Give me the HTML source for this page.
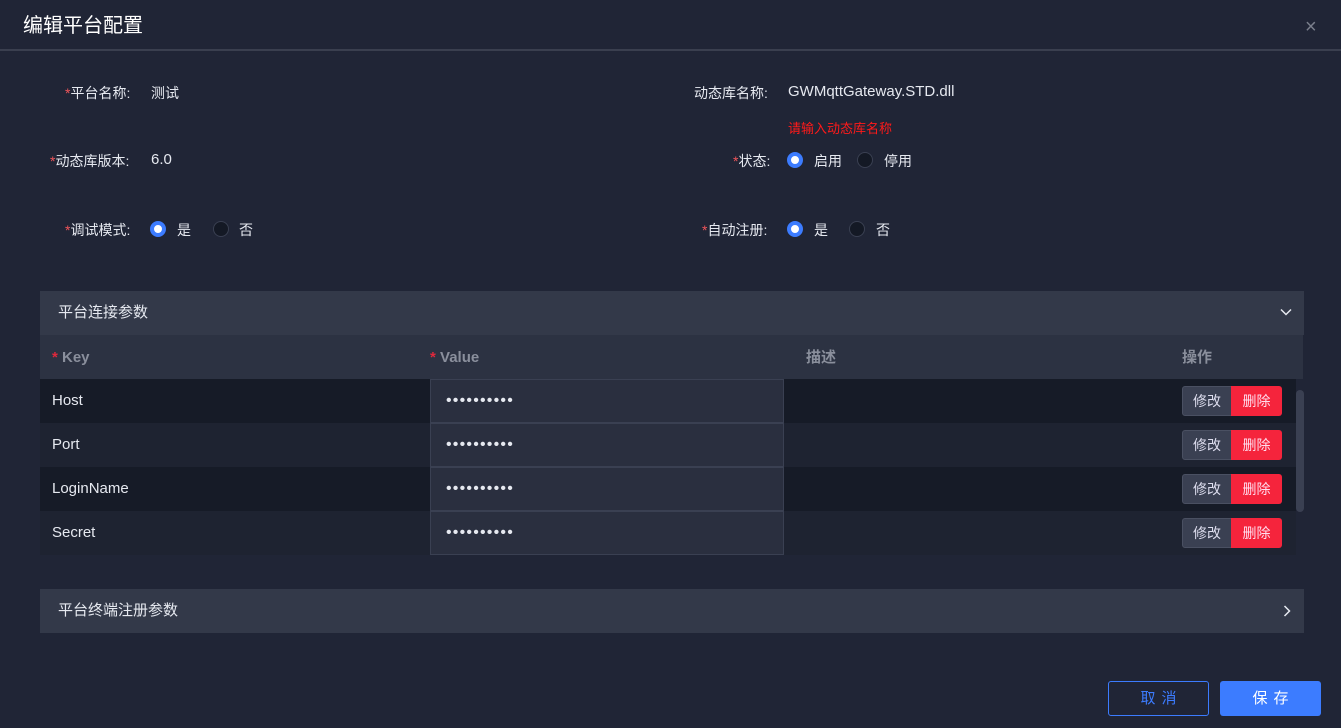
<!DOCTYPE html>
<html><head><meta charset="utf-8"><style>
*{margin:0;padding:0;box-sizing:border-box}
body{width:1341px;height:728px;background:#202536;font-family:"Liberation Sans","Noto Sans CJK SC",sans-serif;color:#e6e9f0;position:relative;overflow:hidden;font-size:14px}
.a{position:absolute}
.title{left:23px;top:9px;font-size:20px;color:#fff}
.sep{left:0;top:49px;width:1341px;height:2px;background:#3a3f4f}
.lbl{font-size:14px;color:#e6e9f0;white-space:nowrap}
.st{color:#f0555a}
.radio{width:16px;height:16px;border-radius:50%;display:inline-block}
.on{background:#fff;border:4px solid #3c7cff}
.off{background:#141925;border:1px solid #3a4052}
.hd{left:40px;width:1264px;height:44px;background:#333949;padding-left:18px;line-height:44px;font-size:15px}
.th{left:40px;top:335px;width:1263px;height:44px;background:#2c3242;font-size:15px;font-weight:bold;color:#8a8f9c;line-height:46px}
.row{left:40px;width:1256px;height:44px;line-height:44px;font-size:15px}
.val{left:430px;width:354px;height:44px;background:#2a2f3f;border:1px solid #3a4052;padding-left:15px;line-height:42px;font-size:16px;letter-spacing:1.2px}
.b1{left:1182px;width:50px;height:30px;background:#3a4052;border:1px solid #4a5062;border-radius:3px 0 0 3px;text-align:center;line-height:28px;font-size:14px;color:#dde}
.b2{left:1231px;width:51px;height:30px;background:#f5243c;border-radius:0 3px 3px 0;text-align:center;line-height:30px;font-size:14px;color:#fde}
</style></head><body>
<div class="a title">编辑平台配置</div>
<div class="a" style="left:1305px;top:16px;font-size:20px;color:#7a7f8c">×</div>
<div class="a sep"></div>

<div class="a lbl" style="left:65px;top:83px"><span class="st">*</span>平台名称:</div><div class="a lbl" style="left:151px;top:83px">测试</div>
<div class="a lbl" style="left:50px;top:151px"><span class="st">*</span>动态库版本:</div><div class="a lbl" style="left:151px;top:151px;font-size:15px">6.0</div>
<div class="a lbl" style="left:65px;top:220px"><span class="st">*</span>调试模式:</div>
<span class="a radio on" style="left:150px;top:221px"></span><div class="a lbl" style="left:177px;top:220px">是</div>
<span class="a radio off" style="left:213px;top:221px"></span><div class="a lbl" style="left:239px;top:220px">否</div>

<div class="a lbl" style="left:694px;top:83px">动态库名称:</div><div class="a lbl" style="left:788px;top:83px;font-size:15px">GWMqttGateway.STD.dll</div>
<div class="a" style="left:788px;top:118px;font-size:13px;color:#ff1a1a">请输入动态库名称</div>
<div class="a lbl" style="left:733px;top:151px"><span class="st">*</span>状态:</div>
<span class="a radio on" style="left:787px;top:152px"></span><div class="a lbl" style="left:814px;top:151px">启用</div>
<span class="a radio off" style="left:857px;top:152px"></span><div class="a lbl" style="left:884px;top:151px">停用</div>
<div class="a lbl" style="left:702px;top:220px"><span class="st">*</span>自动注册:</div>
<span class="a radio on" style="left:787px;top:221px"></span><div class="a lbl" style="left:814px;top:220px">是</div>
<span class="a radio off" style="left:849px;top:221px"></span><div class="a lbl" style="left:876px;top:220px">否</div>

<div class="a hd" style="top:291px">平台连接参数<svg class="a" style="right:12px;top:17px" width="12" height="8" viewBox="0 0 12 8"><path d="M1 1.5L6 6.5L11 1.5" stroke="#e6e9f0" stroke-width="1.5" fill="none"/></svg></div>
<div class="a th"><span class="a" style="left:12px"><span style="color:#e0283c">*</span> Key</span><span class="a" style="left:390px"><span style="color:#e0283c">*</span> Value</span><span class="a" style="left:766px">描述</span><span class="a" style="left:1142px">操作</span></div>

<div class="a row" style="top:379px;background:#161b27"><span style="margin-left:12px">Host</span></div>
<div class="a row" style="top:423px;background:#1e2331"><span style="margin-left:12px">Port</span></div>
<div class="a row" style="top:467px;background:#161b27"><span style="margin-left:12px">LoginName</span></div>
<div class="a row" style="top:511px;background:#1e2331"><span style="margin-left:12px">Secret</span></div>
<div class="a val" style="top:379px">••••••••••</div>
<div class="a val" style="top:423px">••••••••••</div>
<div class="a val" style="top:467px">••••••••••</div>
<div class="a val" style="top:511px">••••••••••</div>
<div class="a b1" style="top:386px">修改</div><div class="a b2" style="top:386px">删除</div>
<div class="a b1" style="top:430px">修改</div><div class="a b2" style="top:430px">删除</div>
<div class="a b1" style="top:474px">修改</div><div class="a b2" style="top:474px">删除</div>
<div class="a b1" style="top:518px">修改</div><div class="a b2" style="top:518px">删除</div>
<div class="a" style="left:1296px;top:390px;width:8px;height:122px;background:#3a4052;border-radius:4px"></div>

<div class="a hd" style="top:589px">平台终端注册参数<svg class="a" style="right:13px;top:16px" width="8" height="12" viewBox="0 0 8 12"><path d="M1.5 1L6.5 6L1.5 11" stroke="#e6e9f0" stroke-width="1.5" fill="none"/></svg></div>

<div class="a" style="left:1108px;top:681px;width:101px;height:35px;border:1px solid #3c7cff;border-radius:3px;color:#3c7cff;text-align:center;line-height:33px;font-size:15px;letter-spacing:6px;padding-left:6px">取消</div>
<div class="a" style="left:1220px;top:681px;width:101px;height:35px;background:#3c7cff;border-radius:3px;color:#fff;text-align:center;line-height:35px;font-size:15px;letter-spacing:6px;padding-left:6px">保存</div>
</body></html>
